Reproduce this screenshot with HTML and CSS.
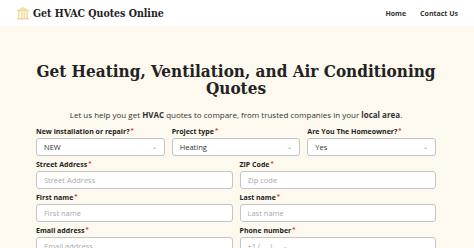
FILE: index.html
```html
<!DOCTYPE html>
<html>
<head>
<meta charset="utf-8">
<link rel="stylesheet" href="styles.css">
</head>
<body>
<header class="topbar">
  <div class="brand">
    <svg class="logo" width="14" height="14" viewBox="0 0 14 14">
      <path d="M1 4 L7 1 L13 4 Z" fill="#f3e2a6"/>
      <rect x="1" y="4" width="12" height="1.5" fill="#efd995"/>
      <rect x="2" y="6" width="1.6" height="6" fill="#f1dea0"/>
      <rect x="5" y="6" width="1.6" height="6" fill="#f1dea0"/>
      <rect x="7.6" y="6" width="1.6" height="6" fill="#f1dea0"/>
      <rect x="10.4" y="6" width="1.6" height="6" fill="#f1dea0"/>
      <rect x="1" y="12" width="12" height="1.5" fill="#efd995"/>
    </svg>
    <span class="brand-name">Get HVAC Quotes Online</span>
  </div>
  <nav class="nav">
    <a class="nav-link">Home</a>
    <a class="nav-link">Contact Us</a>
  </nav>
</header>
<main class="main">
  <h1 class="title">Get Heating, Ventilation, and Air Conditioning Quotes</h1>
  <p class="lead">Let us help you get <b>HVAC</b> quotes to compare, from trusted companies in your <b>local area</b>.</p>
  <form class="form">
    <div class="row row3">
      <div class="field">
        <label class="label">New installation or repair?<sup class="req">*</sup></label>
        <div class="control select"><span class="value">NEW</span><span class="caret">&#8964;</span></div>
      </div>
      <div class="field">
        <label class="label">Project type<sup class="req">*</sup></label>
        <div class="control select"><span class="value">Heating</span><span class="caret">&#8964;</span></div>
      </div>
      <div class="field">
        <label class="label">Are You The Homeowner?<sup class="req">*</sup></label>
        <div class="control select"><span class="value">Yes</span><span class="caret">&#8964;</span></div>
      </div>
    </div>
    <div class="row row2">
      <div class="field">
        <label class="label">Street Address<sup class="req">*</sup></label>
        <div class="control"><span class="ph">Street Address</span></div>
      </div>
      <div class="field">
        <label class="label">ZIP Code<sup class="req">*</sup></label>
        <div class="control"><span class="ph">Zip code</span></div>
      </div>
    </div>
    <div class="row row2">
      <div class="field">
        <label class="label">First name<sup class="req">*</sup></label>
        <div class="control"><span class="ph">First name</span></div>
      </div>
      <div class="field">
        <label class="label">Last name<sup class="req">*</sup></label>
        <div class="control"><span class="ph">Last name</span></div>
      </div>
    </div>
    <div class="row row2">
      <div class="field">
        <label class="label">Email address<sup class="req">*</sup></label>
        <div class="control"><span class="ph">Email address</span></div>
      </div>
      <div class="field">
        <label class="label">Phone number<sup class="req">*</sup></label>
        <div class="control"><span class="ph">+1 (___) ___-____</span></div>
      </div>
    </div>
  </form>
</main>
</body>
</html>
```
FILE: styles.css
```css
html, body { margin: 0; padding: 0; }
body {
  background: #fdf9ef;
  font-family: "Open Sans", "Noto Sans", sans-serif;
  color: #222;
  overflow: hidden;
  height: 248px;
}
.topbar {
  background: #fff;
  height: 26px;
  display: flex;
  align-items: center;
  justify-content: space-between;
  padding: 0 16px;
}
.brand { display: flex; align-items: center; gap: 3px; }
.logo { display: block; }
.brand-name {
  font-family: "DejaVu Serif Condensed", "DejaVu Serif", serif;
  font-weight: bold;
  font-size: 10.5px;
  color: #222;
}
.nav { display: flex; gap: 14px; }
.nav-link {
  font-size: 7px;
  font-weight: bold;
  color: #333;
}
.main {
  padding: 0 38px 0 36px;
}
.title {
  margin: 37px 0 0;
  text-align: center;
  font-family: "DejaVu Serif Condensed", "DejaVu Serif", serif;
  font-weight: bold;
  font-size: 17px;
  line-height: 17px;
  color: #222;
}
.lead {
  margin: 12px 0 0;
  text-align: center;
  font-size: 8px;
  color: #333;
}
.form { margin-top: 7px; display: flex; flex-direction: column; gap: 4px; }
.row { display: grid; gap: 7px; }
.row3 { grid-template-columns: 1fr 1fr 1fr; }
.row2 { grid-template-columns: 1fr 1fr; }
.field { display: flex; flex-direction: column; }
.label {
  font-size: 7px;
  font-weight: bold;
  color: #222;
  line-height: 10px;
  margin-bottom: 1px;
}
.req { color: #d33; font-size: 6px; vertical-align: top; line-height: 6px; margin-left: 1px; }
.control {
  box-sizing: border-box;
  background: #fff;
  border: 1px solid #c4c4c4;
  border-radius: 3px;
  height: 18px;
  display: flex;
  align-items: center;
  padding: 0 7px;
  font-size: 7.5px;
}
.select { justify-content: space-between; }
.value { color: #333; }
.caret { color: #888; font-size: 6px; line-height: 6px; }
.ph { color: #aaa; }
```
